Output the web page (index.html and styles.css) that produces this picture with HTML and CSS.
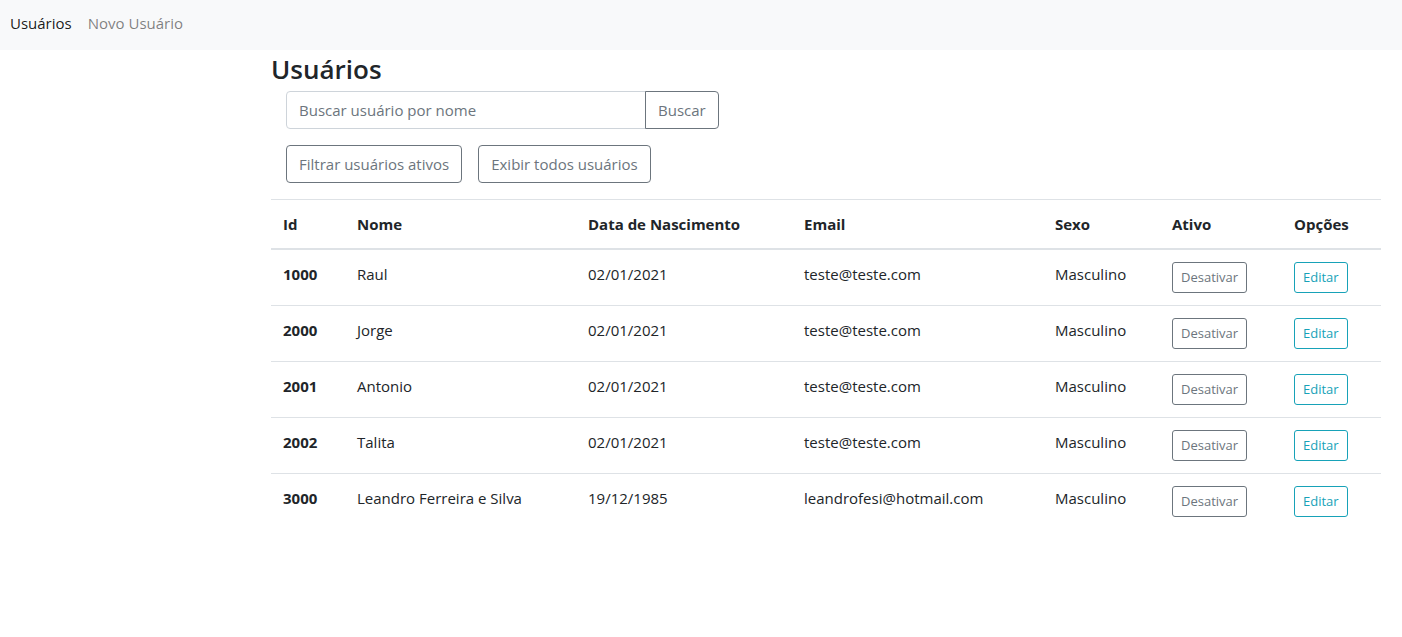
FILE: index.html
```html
<!DOCTYPE html>
<html lang="pt-BR">
<head>
<meta charset="utf-8">
<title>Usuários</title>
<link rel="stylesheet" href="styles.css">
</head>
<body>
<nav class="navbar">
  <a class="nav-link active" href="#">Usuários</a>
  <a class="nav-link" href="#">Novo Usuário</a>
</nav>
<main class="content">
  <h3 class="title">Usuários</h3>
  <div class="controls">
    <div class="input-group">
      <input class="form-control" type="text" placeholder="Buscar usuário por nome">
      <button class="btn btn-outline-secondary btn-append">Buscar</button>
    </div>
    <div class="filters">
      <button class="btn btn-outline-secondary">Filtrar usuários ativos</button>
      <button class="btn btn-outline-secondary">Exibir todos usuários</button>
    </div>
  </div>
  <table class="table">
    <colgroup>
      <col class="c-id"><col class="c-nome"><col class="c-data"><col class="c-email"><col class="c-sexo"><col class="c-ativo"><col class="c-opc">
    </colgroup>
    <thead>
      <tr><th>Id</th><th>Nome</th><th>Data de Nascimento</th><th>Email</th><th>Sexo</th><th>Ativo</th><th>Opções</th></tr>
    </thead>
    <tbody>
      <tr><th>1000</th><td>Raul</td><td>02/01/2021</td><td>teste@teste.com</td><td>Masculino</td><td><button class="btn btn-sm btn-outline-secondary">Desativar</button></td><td><button class="btn btn-sm btn-outline-info">Editar</button></td></tr>
      <tr><th>2000</th><td>Jorge</td><td>02/01/2021</td><td>teste@teste.com</td><td>Masculino</td><td><button class="btn btn-sm btn-outline-secondary">Desativar</button></td><td><button class="btn btn-sm btn-outline-info">Editar</button></td></tr>
      <tr><th>2001</th><td>Antonio</td><td>02/01/2021</td><td>teste@teste.com</td><td>Masculino</td><td><button class="btn btn-sm btn-outline-secondary">Desativar</button></td><td><button class="btn btn-sm btn-outline-info">Editar</button></td></tr>
      <tr><th>2002</th><td>Talita</td><td>02/01/2021</td><td>teste@teste.com</td><td>Masculino</td><td><button class="btn btn-sm btn-outline-secondary">Desativar</button></td><td><button class="btn btn-sm btn-outline-info">Editar</button></td></tr>
      <tr><th>3000</th><td>Leandro Ferreira e Silva</td><td>19/12/1985</td><td>leandrofesi@hotmail.com</td><td>Masculino</td><td><button class="btn btn-sm btn-outline-secondary">Desativar</button></td><td><button class="btn btn-sm btn-outline-info">Editar</button></td></tr>
    </tbody>
  </table>
</main>
</body>
</html>
```
FILE: styles.css
```css
* { box-sizing: border-box; }
html, body { margin: 0; }
body {
  font-family: "Open Sans", "Noto Sans", sans-serif;
  font-size: 15px;
  line-height: 24px;
  color: #212529;
  background: #fff;
}
.navbar {
  display: flex;
  height: 50px;
  padding: 3px 2px 7px;
  background: #f8f9fa;
}
.nav-link {
  padding: 8px;
  color: rgba(0,0,0,.5);
  text-decoration: none;
}
.nav-link.active { color: rgba(0,0,0,.9); }
.content {
  margin-left: 271px;
  width: 1110px;
}
.title {
  margin: 2px 0 5px;
  font-size: 26px;
  font-weight: 600;
  line-height: 34px;
}
.controls {
  padding-left: 15px;
  display: flex;
  flex-direction: column;
  gap: 16px;
  margin-bottom: 16px;
}
.input-group { display: flex; }
.form-control {
  width: 360px;
  height: 38px;
  padding: 6px 12px;
  font: inherit;
  color: #495057;
  border: 1px solid #ced4da;
  border-radius: 4px 0 0 4px;
  outline: none;
}
.form-control::placeholder { color: #6c757d; }
.btn {
  font: inherit;
  height: 38px;
  padding: 6px 12px;
  border: 1px solid transparent;
  border-radius: 4px;
  background: transparent;
  cursor: pointer;
}
.btn-append { border-radius: 0 4px 4px 0; margin-left: -1px; }
.btn-outline-secondary { color: #6c757d; border-color: #6c757d; }
.btn-outline-info { color: #17a2b8; border-color: #17a2b8; }
.btn-sm {
  height: 31px;
  padding: 4px 8px;
  font-size: 13px;
  line-height: 21px;
  border-radius: 3px;
}
.filters { display: flex; gap: 16px; }
.table {
  width: 1110px;
  border-collapse: collapse;
  table-layout: fixed;
}
.c-id { width: 74px; }
.c-nome { width: 231px; }
.c-data { width: 216px; }
.c-email { width: 251px; }
.c-sexo { width: 117px; }
.c-ativo { width: 122px; }
.c-opc { width: 99px; }
.table th, .table td {
  padding: 12px;
  text-align: left;
  vertical-align: top;
  border-top: 1px solid #dee2e6;
}
.table th { font-weight: 700; }
.table thead th { border-bottom: 2px solid #dee2e6; }
.table td { font-weight: 400; }
```
